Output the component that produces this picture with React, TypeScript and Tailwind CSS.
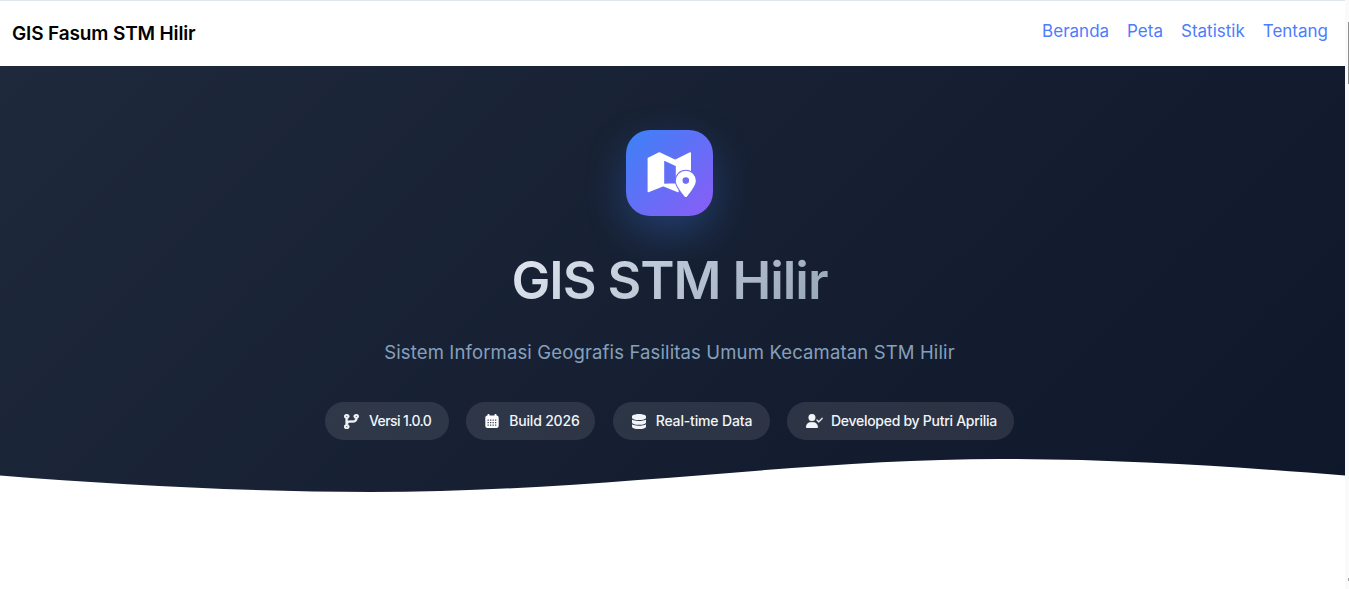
import React from "react";
import { FaCodeBranch, FaDatabase, FaUserCheck } from "react-icons/fa6";

function CalendarIcon() {
  return (
    <svg width="14" height="14" viewBox="0 0 14 14" fill="white">
      <rect x="2.500" y="0" width="2" height="3" rx="0.800" />
      <rect x="9.500" y="0" width="2" height="3" rx="0.800" />
      <rect x="0.300" y="1.500" width="13.400" height="12.500" rx="2.200" />
      <g fill="#3b4252">
        {[5.500, 8, 10.500].map((y) =>
          [2.500, 5, 7.500, 10].map((x) => <rect key={`${x}-${y}`} x={x} y={y} width="1.300" height="1.300" rx="0.200" />)
        )}
      </g>
    </svg>
  );
}

const chips = [
  { icon: <FaCodeBranch className="w-[15px] h-[15px]" preserveAspectRatio="none" stroke="currentColor" strokeWidth={12} />, label: "Versi 1.0.0", w: "w-[124px]", t: "tracking-[-0.6px]" },
  { icon: <CalendarIcon />, label: "Build 2026", w: "w-[129px]", t: "tracking-[-0.2px]" },
  { icon: <FaDatabase className="w-[14px] h-[15px]" preserveAspectRatio="none" />, label: "Real-time Data", w: "w-[157px]", t: "tracking-[-0.15px]" },
  { icon: <FaUserCheck className="w-[17px] h-[14px] -mr-[2px]" preserveAspectRatio="none" stroke="currentColor" strokeWidth={10} />, label: "Developed by Putri Aprilia", w: "w-[227px]", t: "tracking-[-0.28px]" },
];

function MapIcon() {
  return (
    <svg className="absolute inset-0" width="87" height="86" viewBox="626 130 87 86">
      <path
        fill="white"
        stroke="white"
        strokeWidth="1.400"
        strokeLinejoin="round"
        fillRule="evenodd"
        d="M648.300 158.500L659.300 153L675.200 160.500L690.300 153V176H678V191.500L663.300 185.500L648.300 191.500ZM663.500 159.500L676.500 165.500V184L663.500 184.500Z"
      />
      <path fill="#6e6df6" d="M685.800 169.800a11 11 0 0 1 11 11c0 5.200-6 12.300-9.400 16.600-.9 1-2.300 1-3.200 0-3.400-4.300-9.400-11.400-9.400-16.600a11 11 0 0 1 11-11z" />
      <path
        fill="white"
        fillRule="evenodd"
        d="M685.800 170.800a10 10 0 0 1 10 10c0 4.800-5.600 11.600-8.800 15.600-.6.800-1.800.8-2.400 0-3.200-4-8.800-10.800-8.800-15.600a10 10 0 0 1 10-10zm0 6.500a3.300 3.300 0 1 0 0 6.600 3.300 3.300 0 0 0 0-6.600z"
      />
    </svg>
  );
}

export default function App() {
  return (
    <div className="h-[589px] overflow-hidden bg-white flex font-['Inter','Liberation_Sans',sans-serif]">
      <div className="flex-1 min-w-0 flex flex-col">
        <nav className="h-[66px] shrink-0 bg-white border-t border-[#dfe7ec] flex items-center justify-between pl-[12px] pr-[17px]">
          <span className="mt-[2px] text-[19px] font-semibold tracking-[-0.14px] text-black">GIS Fasum STM Hilir</span>
          <div className="flex gap-[18px] text-[17px] text-[#4d7cfe] -mt-[3px]">
            <a>Beranda</a>
            <a>Peta</a>
            <a>Statistik</a>
            <a>Tentang</a>
          </div>
        </nav>
        <section className="relative h-[426px] shrink-0 bg-[linear-gradient(135deg,#1e293b_0%,#0f172a_100%)] flex flex-col items-center pt-[64px] pr-[6px]">
          <div className="relative w-[87px] h-[86px] rounded-[24px] bg-[linear-gradient(135deg,#3b82f6,#8b5cf6)] shadow-[0_16px_40px_rgba(59,130,246,0.3)]">
            <MapIcon />
          </div>
          <h1 className="mt-[30px] text-[52px] leading-[70px] font-semibold tracking-[-1.05px] text-transparent bg-clip-text bg-[linear-gradient(135deg,#e2e8f0,#94a3b8)]">GIS STM Hilir</h1>
          <p className="mt-[22px] text-[18.5px] leading-[28px] tracking-[0.14px] text-[#86a0bc]">Sistem Informasi Geografis Fasilitas Umum Kecamatan STM Hilir</p>
          <div className="mt-[36px] flex gap-[17.33px]">
            {chips.map((c) => (
              <div key={c.label} className={`${c.w} ${c.t} h-[38px] rounded-full bg-white/10 text-[#f1f5f9] flex items-center pl-[19px] gap-[10px] text-[14px] font-medium`}>
                {c.icon}
                <span className="-mt-[2px]">{c.label}</span>
              </div>
            ))}
          </div>
          <svg className="absolute left-0 bottom-0 w-full h-[33px]" viewBox="0 0 1345 33" preserveAspectRatio="none" fill="white">
            <path d="M0 16.500C120 26 250 33 370 33C600 33 800 0 1000 0C1120 0 1240 8 1345 16.500V33H0Z" />
          </svg>
        </section>
        <div className="flex-1 bg-white" />
      </div>
      <div className="w-[4px] shrink-0 bg-[#fafafa] flex flex-col justify-between items-end">
        <div className="mt-[22px] h-[62px] w-[1px] bg-[#8f8f8f]" />
        <div className="mb-[8px] h-[3px] w-[1px] bg-[#a0a0a0]" />
      </div>
    </div>
  );
}
